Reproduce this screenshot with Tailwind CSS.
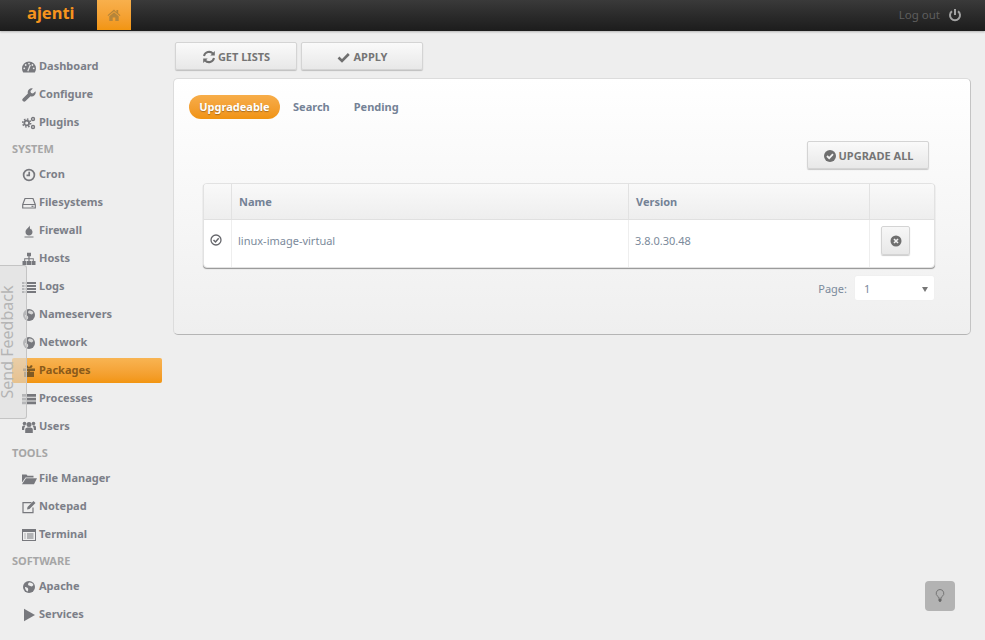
<!DOCTYPE html>
<html lang="en">

<head>
    <meta charset="UTF-8" />
    <meta name="viewport" content="width=device-width, initial-scale=1.0" />
    <title>Ajenti - Packages</title>
    <script src="https://cdn.jsdelivr.net/npm/@tailwindcss/browser@4"></script>
</head>

<body class="bg-[#eeeeee] font-['Noto_Sans','Open_Sans',sans-serif] h-[640px] w-[985px] overflow-hidden relative">
    <!-- top bar -->
    <header class="h-[31px] bg-gradient-to-b from-[#3a3a3a] to-[#1c1c1c] flex items-start shadow-[0_1px_2px_rgba(0,0,0,0.25)]">
        <div class="w-[97px] pl-[27px] h-[30px] flex items-center text-[#f7941d] text-[16.5px] font-bold leading-none pb-[3px]">ajenti</div>
        <div class="w-[34px] h-[30px] bg-gradient-to-b from-[#f8b04c] to-[#f2950f] flex items-center justify-center">
            <svg class="w-[14px] h-[14px]" viewBox="0 0 14 14" fill="#b5853a"><path d="M7 1.500 0.500 7.200l.8.900L7 3.200l5.700 4.900.8-.9-2.300-2V2h-1.800v2.100z"/><path d="M7 4.300 2.300 8.300V13h3.400V9.500h2.600V13h3.400V8.300z"/></svg>
        </div>
        <div class="ml-auto h-[30px] flex items-center pr-[23px] text-[#5e5e5e] text-[11.5px]">
            <span>Log out</span>
            <svg class="w-[14px] h-[14px] ml-[8px]" viewBox="0 0 14 14" fill="none" stroke="#a3a3a3" stroke-width="2"><path d="M4 3.200a5 5 0 1 0 6 0"/><path d="M7 1v6"/></svg>
        </div>
    </header>

    <div class="flex items-start">
        <!-- sidebar -->
        <nav class="w-[150px] ml-[12px] pt-[23px] text-[11px] font-bold text-[#7c7f88] shrink-0">
            <a class="h-[25px] mb-[3px] pl-[10px] flex items-center gap-[3px]">
                <svg class="w-[14px] h-[14px]" viewBox="0 0 14 14"><path d="M7 1.500a7 7 0 0 0-7 7c0 1.500.4 2.800 1.200 4h11.600c.8-1.200 1.200-2.500 1.200-4a7 7 0 0 0-7-7z" fill="#77787d"/><path d="M5.800 11.200 8.300 5" stroke="#e8e8e8" stroke-width="1.200"/><circle cx="7" cy="3.600" r=".9" fill="#e8e8e8"/><circle cx="3.700" cy="5" r=".9" fill="#e8e8e8"/><circle cx="2.300" cy="8.300" r=".9" fill="#e8e8e8"/><circle cx="11.700" cy="8.300" r=".9" fill="#e8e8e8"/><circle cx="10.400" cy="5" r=".9" fill="#e8e8e8"/></svg>
                Dashboard</a>
            <a class="h-[25px] mb-[3px] pl-[10px] flex items-center gap-[3px]">
                <svg class="w-[14px] h-[14px]" viewBox="0 0 14 14" fill="#77787d"><path d="M13.500 3.200 11 5.600 9 5 8.400 3l2.500-2.500a4 4 0 0 0-5 5L.9 10.400a1.900 1.900 0 0 0 2.700 2.700l4.900-4.900a4 4 0 0 0 5-5z"/></svg>
                Configure</a>
            <a class="h-[25px] mb-[3px] pl-[10px] flex items-center gap-[3px]">
                <svg class="w-[14px] h-[14px]" viewBox="0 0 14 14" fill="none" stroke="#77787d"><circle cx="4.700" cy="7" r="2.400" stroke-width="1.800"/><circle cx="4.700" cy="7" r="4" stroke-width="1.500" stroke-dasharray="1.600 1.500"/><circle cx="11" cy="3" r="1.500" stroke-width="1.400"/><circle cx="11" cy="11" r="1.500" stroke-width="1.400"/></svg>
                Plugins</a>
            <div class="h-[21px] pt-[2px] mb-[3px] text-[#a6a6a6] flex items-center">SYSTEM</div>
            <a class="h-[25px] mb-[3px] pl-[10px] flex items-center gap-[3px]">
                <svg class="w-[14px] h-[14px]" viewBox="0 0 14 14" fill="none" stroke="#77787d" stroke-width="1.700"><circle cx="7" cy="7" r="5.400"/><path d="M7.200 3.700V7.400H4.500"/></svg>
                Cron</a>
            <a class="h-[25px] mb-[3px] pl-[10px] flex items-center gap-[3px]">
                <svg class="w-[14px] h-[14px]" viewBox="0 0 14 14" fill="none" stroke="#77787d" stroke-width="1.200"><path d="M3 2.500h8l2.300 6v3.500H.7V8.500zM.7 8.500h12.600"/><path d="M9.500 10.300h2" /></svg>
                Filesystems</a>
            <a class="h-[25px] mb-[3px] pl-[10px] flex items-center gap-[3px]">
                <svg class="w-[14px] h-[14px]" viewBox="0 0 14 14" fill="#77787d"><path d="M8 .5c.4 2.500-4.500 4-4.500 7.500 0 2 1.500 3.500 3.500 3.500s3.500-1.500 3.500-3.500C10.500 6.500 9.500 6 9 4.500 8.500 6 7.500 5.500 8 .5z"/><path d="M2.500 12.500h9v1h-9z"/></svg>
                Firewall</a>
            <a class="h-[25px] mb-[3px] pl-[10px] flex items-center gap-[3px]">
                <svg class="w-[14px] h-[14px]" viewBox="0 0 14 14" fill="#77787d"><path d="M5 .8h4v3.500H7.600v2h4.200v2.700H13.500V13h-4V9h1.300V7.300H7.600V9H9v4H5V9h1.400V7.300H3.200V9h1.300v4h-4V9h1.700V6.300h4.200v-2H5z"/></svg>
                Hosts</a>
            <a class="h-[25px] mb-[3px] pl-[10px] flex items-center gap-[3px]">
                <svg class="w-[14px] h-[14px]" viewBox="0 0 14 14" fill="#77787d"><path d="M0 2h2.500v2H0zM3.500 2H14v2H3.500zM0 5h2.500v2H0zM3.500 5H14v2H3.500zM0 8h2.500v2H0zM3.500 8H14v2H3.500zM0 11h2.500v2H0zM3.500 11H14v2H3.500z"/></svg>
                Logs</a>
            <a class="h-[25px] mb-[3px] pl-[10px] flex items-center gap-[3px]">
                <svg class="w-[14px] h-[14px]" viewBox="0 0 14 14"><circle cx="7" cy="7" r="6" fill="#77787d"/><path d="M7 2.500c2-.5 4 .8 4.500 2.500-1 .5-1 1.500-2 1.500S8 5.500 7 5.500 5.500 4 7 2.500zM3 7c1 0 2.500.5 3 1.500S6 11 5.500 11.500C4 11 3 9 3 7z" fill="#d5d5d5"/></svg>
                Nameservers</a>
            <a class="h-[25px] mb-[3px] pl-[10px] flex items-center gap-[3px]">
                <svg class="w-[14px] h-[14px]" viewBox="0 0 14 14"><circle cx="7" cy="7" r="6" fill="#77787d"/><path d="M7 2.500c2-.5 4 .8 4.500 2.500-1 .5-1 1.500-2 1.500S8 5.500 7 5.500 5.500 4 7 2.500zM3 7c1 0 2.500.5 3 1.500S6 11 5.500 11.500C4 11 3 9 3 7z" fill="#d5d5d5"/></svg>
                Network</a>
            <a class="h-[25px] mb-[3px] pl-[10px] flex items-center gap-[3px] rounded-[2px] bg-gradient-to-b from-[#f8b452] to-[#f2950f] text-[#8a5a1a]">
                <svg class="w-[14px] h-[14px]" viewBox="0 0 14 14" fill="#7f5a24"><path d="M1 4.500h12V7H1zM2 7.800h4.300V13H2zM7.700 7.800H12V13H7.700zM6.200 4.500h1.600V13H6.200z"/><path d="M7 4.300C5 4.300 3.500 3.500 3.500 2.300S5.500.5 7 3.500C8.500.5 10.500 1.100 10.500 2.300S9 4.300 7 4.300z"/></svg>
                Packages</a>
            <a class="h-[25px] mb-[3px] pl-[10px] flex items-center gap-[3px]">
                <svg class="w-[14px] h-[14px]" viewBox="0 0 14 14" fill="#77787d"><path d="M0 2h4v2.800H0zM5 2h9v2.800H5zM0 5.700h4v2.800H0zM5 5.700h9v2.800H5zM0 9.400h4v2.800H0zM5 9.400h9v2.800H5z"/></svg>
                Processes</a>
            <a class="h-[25px] mb-[3px] pl-[10px] flex items-center gap-[3px]">
                <svg class="w-[14px] h-[14px]" viewBox="0 0 14 14" fill="#77787d"><circle cx="7" cy="4.500" r="2.500"/><circle cx="2.500" cy="3.500" r="1.800"/><circle cx="11.500" cy="3.500" r="1.800"/><path d="M3.200 13V9.500C3.200 8 4.500 7.500 7 7.500s3.800.5 3.800 2V13zM0 10V7.500c0-1.500 1-2 2.500-2 .5 0 1 .1 1 .3-.8 1-1.300 1.500-1.300 4.200zM14 10V7.500c0-1.500-1-2-2.500-2-.5 0-1 .1-1 .3.800 1 1.300 1.500 1.300 4.200z"/></svg>
                Users</a>
            <div class="h-[21px] pt-[2px] mb-[3px] text-[#a6a6a6] flex items-center">TOOLS</div>
            <a class="h-[25px] mb-[3px] pl-[10px] flex items-center gap-[2px]">
                <svg class="w-[15px] h-[14px]" viewBox="0 0 15 14" fill="#77787d"><path d="M0 2.500h4.500l1 1.300h6v1.700H3.500L0 10.500z"/><path d="M3.900 6.300H15l-3 6H0z"/></svg>
                File Manager</a>
            <a class="h-[25px] mb-[3px] pl-[10px] flex items-center gap-[3px]">
                <svg class="w-[14px] h-[14px]" viewBox="0 0 14 14" fill="none" stroke="#77787d" stroke-width="1.200"><path d="M9.500 2.600H1v10h10V7.500"/><path d="M5 9.500 5.500 7 11.500 1l2 2-6 6z" fill="#77787d" stroke="none"/></svg>
                Notepad</a>
            <a class="h-[25px] mb-[3px] pl-[10px] flex items-center gap-[3px]">
                <svg class="w-[14px] h-[14px]" viewBox="0 0 14 14" fill="none" stroke="#77787d"><rect x=".5" y="1.500" width="13" height="11" stroke-width="1"/><path d="M.5 3h13" stroke-width="2"/><path d="M2.500 6h1M5 6h6.500M2.500 8h1M5 8h6.500M2.500 10h1M5 10h6.500" stroke-width="1"/></svg>
                Terminal</a>
            <div class="h-[21px] pt-[2px] mb-[3px] text-[#a6a6a6] flex items-center">SOFTWARE</div>
            <a class="h-[25px] mb-[3px] pl-[10px] flex items-center gap-[3px]">
                <svg class="w-[14px] h-[14px]" viewBox="0 0 14 14"><circle cx="7" cy="7" r="6" fill="#77787d"/><path d="M7 2.500c2-.5 4 .8 4.500 2.500-1 .5-1 1.500-2 1.500S8 5.500 7 5.500 5.500 4 7 2.500zM3 7c1 0 2.500.5 3 1.500S6 11 5.500 11.500C4 11 3 9 3 7z" fill="#eeeeee"/></svg>
                Apache</a>
            <a class="h-[25px] mb-[3px] pl-[10px] flex items-center gap-[3px]">
                <svg class="w-[14px] h-[14px]" viewBox="0 0 14 14" fill="#77787d"><path d="M2 .8 13 7 2 13.200z"/></svg>
                Services</a>
        </nav>

        <!-- main -->
        <main class="ml-[11px] pt-[11px] w-[798px]">
            <div class="flex gap-[4px] pl-[2px] mb-[8px]">
                <button class="w-[122px] h-[28px] pt-[2px] rounded-[2px] border border-[#d4d4d4] bg-gradient-to-b from-[#fafafa] to-[#e8e8e8] shadow-[0_1px_1px_rgba(0,0,0,0.2)] text-[11px] font-bold text-[#757575] flex items-center justify-center gap-[2px]">
                    <svg class="w-[14px] h-[14px]" viewBox="0 0 14 14" fill="none" stroke="#6f6f6f" stroke-width="2"><path d="M2 6a5.200 5.200 0 0 1 9-2.300M12 8a5.200 5.200 0 0 1-9 2.300"/><path d="M12.800 1v4.500H8.300zM1.200 13V8.500h4.500z" fill="#6f6f6f" stroke="none"/></svg>
                    GET LISTS</button>
                <button class="w-[122px] h-[28px] pt-[2px] rounded-[2px] border border-[#d4d4d4] bg-gradient-to-b from-[#fafafa] to-[#e8e8e8] shadow-[0_1px_1px_rgba(0,0,0,0.2)] text-[11px] font-bold text-[#757575] flex items-center justify-center gap-[4px]">
                    <svg class="w-[13px] h-[13px]" viewBox="0 0 13 13" fill="none" stroke="#6f6f6f" stroke-width="2.600"><path d="M1.500 6.500 5 10l6.800-7"/></svg>
                    APPLY</button>
            </div>

            <section class="h-[257px] rounded-[5px] border border-[#dcdcdc] border-b-[#b5b5b5] border-r-[#c4c4c4] bg-gradient-to-b from-white to-[#efefef] pt-[16px] px-[15px]">
                <div class="flex items-center text-[11px] font-bold text-[#748296] h-[24px]">
                    <span class="w-[91px] h-[24px] rounded-full bg-gradient-to-b from-[#f7ad49] to-[#f0930f] text-white flex items-center justify-center [text-shadow:0_1px_1px_rgba(0,0,0,0.3)]">Upgradeable</span>
                    <span class="ml-[13px]">Search</span>
                    <span class="ml-[24px]">Pending</span>
                </div>
                <div class="flex justify-end mt-[22px] pr-[26px]">
                    <button class="w-[122px] h-[28px] pt-[2px] rounded-[2px] border border-[#d4d4d4] bg-gradient-to-b from-[#fafafa] to-[#e8e8e8] shadow-[0_1px_1px_rgba(0,0,0,0.2)] text-[11px] font-bold text-[#757575] flex items-center justify-center gap-[2px]">
                        <svg class="w-[14px] h-[14px]" viewBox="0 0 14 14"><circle cx="7" cy="7" r="6" fill="#6f6f6f"/><path d="M4 7l2.200 2.200L10 5.200" fill="none" stroke="#f3f3f3" stroke-width="1.800"/></svg>
                        UPGRADE ALL</button>
                </div>
                <div class="mt-[14px] ml-[14px] w-[732px] rounded-[4px] border border-[#e2e2e2] shadow-[0_1px_1px_rgba(0,0,0,0.4)] bg-white overflow-hidden">
                    <div class="grid grid-cols-[28px_397px_241px_1fr] h-[36px] bg-gradient-to-b from-[#f9f9f9] to-[#eeeeee] border-b border-[#e0e0e0] text-[11px] font-bold text-[#748296]">
                        <div class="border-r border-[#e2e2e2]"></div>
                        <div class="border-r border-[#e2e2e2] flex items-center pl-[7px] pt-[2px]">Name</div>
                        <div class="border-r border-[#e2e2e2] flex items-center pl-[7px] pt-[2px]">Version</div>
                        <div></div>
                    </div>
                    <div class="grid grid-cols-[28px_397px_241px_1fr] h-[47px] text-[11px] text-[#7b8a9b]">
                        <div class="border-r border-[#eeeeee] flex justify-center pr-[3px] pt-[14px]">
                            <svg class="w-[12px] h-[12px]" viewBox="0 0 12 12" fill="none" stroke="#66676c" stroke-width="1.300"><circle cx="6" cy="6" r="5"/><path d="M3.500 6l2 2L8.700 4.300" stroke-width="1.500"/></svg>
                        </div>
                        <div class="border-r border-[#eeeeee] pl-[6px] pt-[13px]">linux-image-virtual</div>
                        <div class="border-r border-[#eeeeee] pl-[6px] pt-[13px]">3.8.0.30.48</div>
                        <div class="flex items-start pl-[11px] pt-[6px]">
                            <button class="w-[29px] h-[29px] rounded-[2px] border border-[#d4d4d4] bg-gradient-to-b from-[#f7f7f7] to-[#e8e8e8] shadow-[0_1px_1px_rgba(0,0,0,0.2)] flex items-center justify-center">
                                <svg class="w-[12px] h-[12px]" viewBox="0 0 12 12"><circle cx="6" cy="6" r="5.500" fill="#6f6f6f"/><path d="M4 4l4 4M8 4l-4 4" stroke="#f0f0f0" stroke-width="1.600"/></svg>
                            </button>
                        </div>
                    </div>
                </div>
                <div class="flex justify-end items-center mt-[7px] mr-[20px] text-[11px] text-[#7b8a9b]">
                    <span class="mr-[7px] pt-[2px]">Page:</span>
                    <div class="w-[81px] h-[26px] pt-[2px] rounded-[3px] bg-white border border-[#f0f0f0] flex items-center justify-between pl-[9px] pr-[6px]">
                        <span>1</span>
                        <span class="w-0 h-0 border-l-[3px] border-r-[3px] border-t-[5px] border-l-transparent border-r-transparent border-t-[#777777]"></span>
                    </div>
                </div>
            </section>
        </main>
    </div>

    <!-- feedback tab -->
    <div class="absolute left-0 top-[265px] w-[27px] h-[154px] rounded-r-[3px] border border-l-0 border-[#c4c4c4] bg-[#e0e0e0]/60 flex items-center justify-center">
        <span class="-rotate-90 whitespace-nowrap text-[#b5b5b5] text-[16px] leading-none ml-[-11px]">Send Feedback</span>
    </div>

    <!-- hint button -->
    <div class="absolute left-[925px] top-[581px] w-[30px] h-[30px] rounded-[4px] bg-[#b3b3b3] flex items-center justify-center">
        <svg class="w-[12px] h-[16px]" viewBox="0 0 12 16" fill="none"><path d="M6 1.500a3.800 3.800 0 0 0-2.200 6.900c.5.500.7 1 .7 1.800h3c0-.8.2-1.300.7-1.800A3.800 3.800 0 0 0 6 1.500z" stroke="#757575" stroke-width="1"/><path d="M4.500 11h3v1.500l-1 1.500h-1l-1-1.500z" fill="#666666"/></svg>
    </div>
</body>

</html>
